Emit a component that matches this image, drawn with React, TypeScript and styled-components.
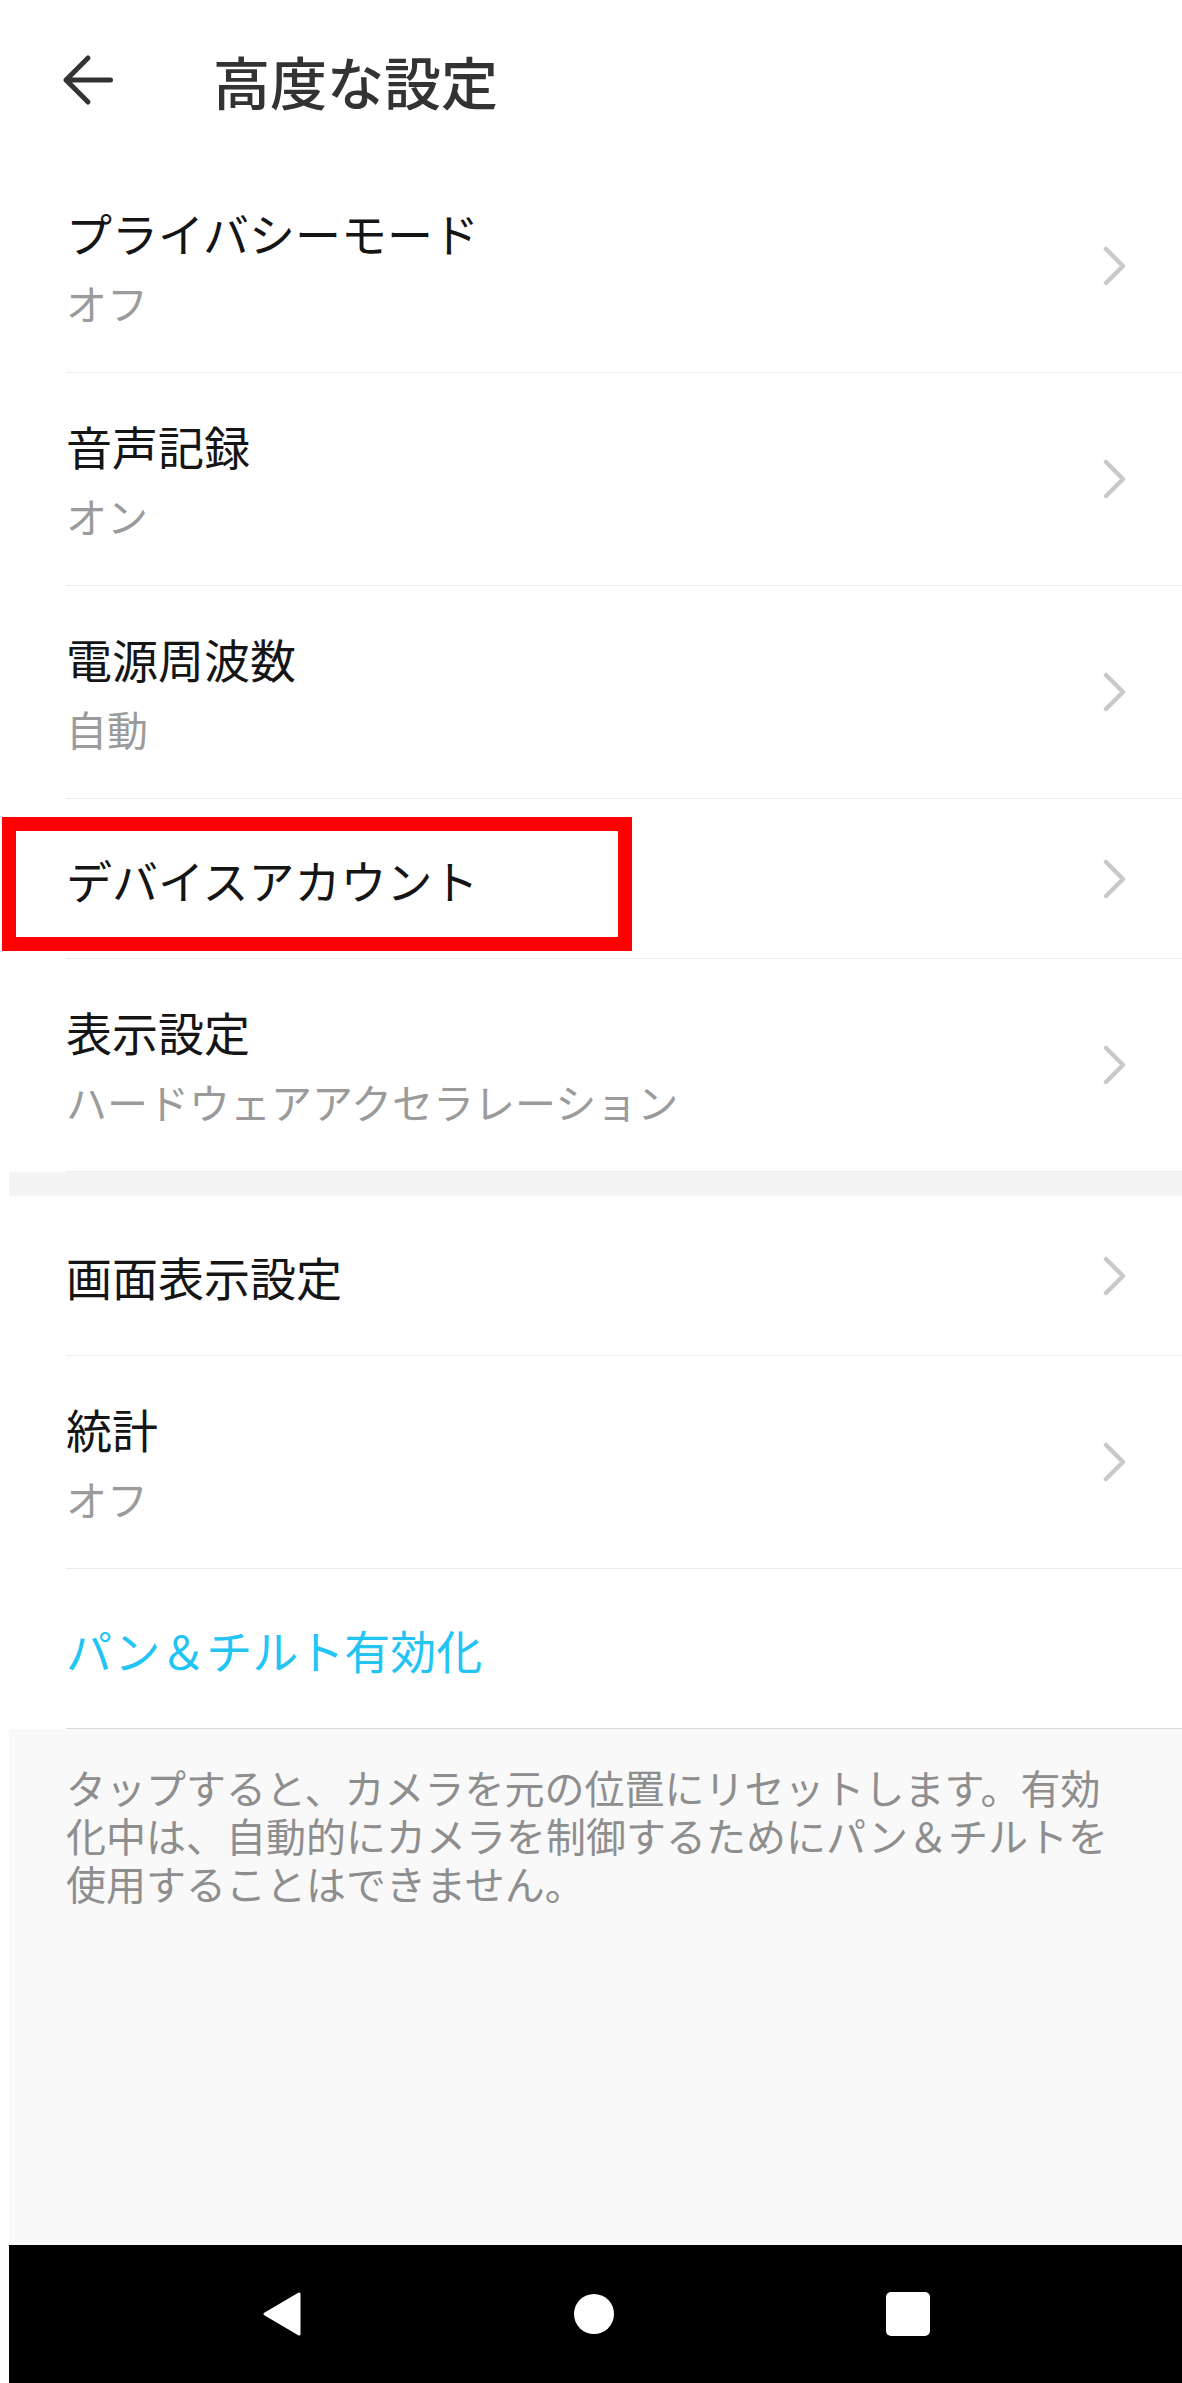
import React from "react";
import styled, { createGlobalStyle } from "styled-components";

const GlobalStyle = createGlobalStyle`
  html, body {
    margin: 0;
    padding: 0;
    background: #ffffff;
  }
  body {
    font-family: "Noto Sans CJK JP", "Noto Sans", sans-serif;
  }
  * {
    box-sizing: border-box;
  }
`;

const Screen = styled.div`
  margin-left: 9px;
  width: 1173px;
  height: 2383px;
  display: flex;
  flex-direction: column;
  background: #ffffff;
`;

const Header = styled.header`
  flex: none;
  height: 160px;
  display: flex;
  align-items: center;
  padding-left: 52px;
`;

const BackButton = styled.button`
  flex: none;
  width: 54px;
  height: 54px;
  padding: 0;
  border: 0;
  background: none;
  display: flex;
  cursor: pointer;
`;

const Title = styled.h1`
  margin: 0 0 0 98px;
  font-size: 57px;
  line-height: 1;
  font-weight: 500;
  color: #333333;
`;

const Item = styled.div`
  position: relative;
  flex: none;
  padding-left: 57px;
`;

const ItemBody = styled.div<{ $tall?: boolean; $strong?: boolean }>`
  height: ${(p) => (p.$tall ? 213 : 160)}px;
  display: flex;
  align-items: center;
  justify-content: space-between;
  padding-right: 55px;
  border-bottom: 1px solid ${(p) => (p.$strong ? "#dadada" : "#ebebeb")};
`;

const Texts = styled.div`
  display: flex;
  flex-direction: column;
  gap: 12px;
`;

const ItemTitle = styled.div<{ $accent?: boolean }>`
  font-size: 46px;
  line-height: 60px;
  color: ${(p) => (p.$accent ? "#22c4f4" : "#151515")};
`;

const ItemValue = styled.div`
  font-size: 41px;
  line-height: 56px;
  color: #9b9b9b;
`;

const Highlight = styled.div`
  position: absolute;
  left: -7px;
  top: 18px;
  width: 630px;
  height: 134px;
  border: 14px solid #ff0000;
  pointer-events: none;
`;

const Band = styled.div`
  flex: none;
  height: 24px;
  background: #f4f4f4;
`;

const Note = styled.p`
  flex: 1;
  margin: 0;
  padding: 34px 66px 0 57px;
  background: #f9f9f9;
  font-size: 40px;
  line-height: 48px;
  color: #8e8e8e;
`;

const NavBar = styled.nav`
  flex: none;
  height: 138px;
  background: #000000;
  display: flex;
  align-items: center;
  justify-content: center;
  gap: 272px;
`;

const HomeDot = styled.div`
  width: 40px;
  height: 40px;
  border-radius: 50%;
  background: #ffffff;
`;

const RecentSquare = styled.div`
  width: 44px;
  height: 44px;
  border-radius: 5px;
  background: #ffffff;
`;

const BackArrow = () => (
  <svg width="54" height="54" viewBox="0 0 54 54" fill="none">
    <path
      d="M27 5 L5 27 L27 49 M5 27 H49.5"
      stroke="#333333"
      strokeWidth="5"
      strokeLinecap="round"
      strokeLinejoin="round"
    />
  </svg>
);

const Chevron = () => (
  <svg width="24" height="40" viewBox="0 0 24 40" fill="none">
    <path
      d="M3 3 L20 20 L3 37"
      stroke="#c9c9c9"
      strokeWidth="4.5"
      strokeLinecap="round"
      strokeLinejoin="round"
    />
  </svg>
);

const NavBack = () => (
  <svg width="40" height="46" viewBox="0 0 40 46">
    <path
      d="M37 3 L37 43 L3 23 Z"
      fill="#ffffff"
      stroke="#ffffff"
      strokeWidth="3"
      strokeLinejoin="round"
    />
  </svg>
);

type Entry = {
  title: string;
  value?: string;
  highlight?: boolean;
};

const firstGroup: Entry[] = [
  { title: "プライバシーモード", value: "オフ" },
  { title: "音声記録", value: "オン" },
  { title: "電源周波数", value: "自動" },
  { title: "デバイスアカウント", highlight: true },
  { title: "表示設定", value: "ハードウェアアクセラレーション" },
];

const secondGroup: Entry[] = [
  { title: "画面表示設定" },
  { title: "統計", value: "オフ" },
];

const SettingRow = ({ entry }: { entry: Entry }) => (
  <Item>
    <ItemBody $tall={!!entry.value}>
      <Texts>
        <ItemTitle>{entry.title}</ItemTitle>
        {entry.value && <ItemValue>{entry.value}</ItemValue>}
      </Texts>
      <Chevron />
    </ItemBody>
    {entry.highlight && <Highlight />}
  </Item>
);

export default function App() {
  return (
    <>
      <GlobalStyle />
      <Screen>
        <Header>
          <BackButton aria-label="戻る">
            <BackArrow />
          </BackButton>
          <Title>高度な設定</Title>
        </Header>
        {firstGroup.map((e) => (
          <SettingRow key={e.title} entry={e} />
        ))}
        <Band />
        {secondGroup.map((e) => (
          <SettingRow key={e.title} entry={e} />
        ))}
        <Item>
          <ItemBody $strong>
            <ItemTitle $accent>パン＆チルト有効化</ItemTitle>
          </ItemBody>
        </Item>
        <Note>
          タップすると、カメラを元の位置にリセットします。有効化中は、自動的にカメラを制御するためにパン＆チルトを使用することはできません。
        </Note>
        <NavBar>
          <NavBack />
          <HomeDot />
          <RecentSquare />
        </NavBar>
      </Screen>
    </>
  );
}
